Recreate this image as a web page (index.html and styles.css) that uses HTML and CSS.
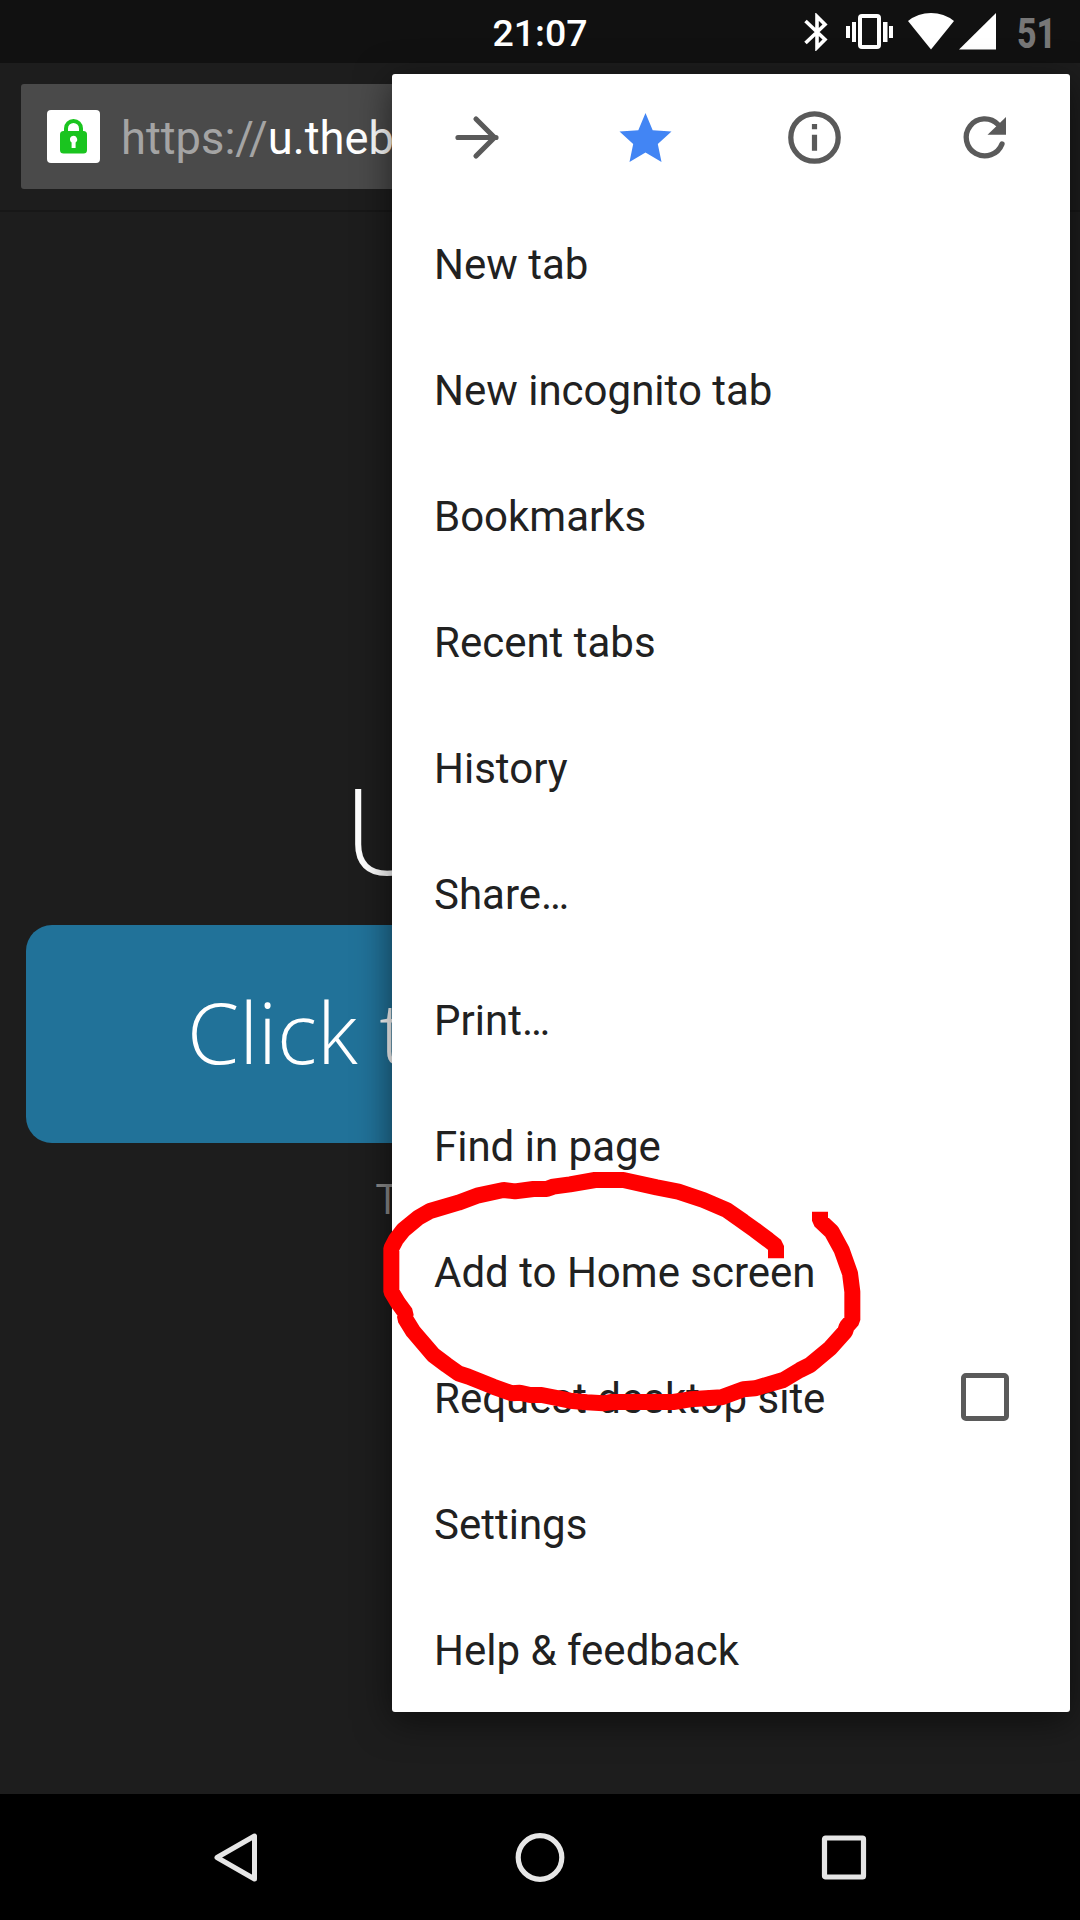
FILE: index.html
```html
<!DOCTYPE html>
<html lang="en">
<head>
<meta charset="utf-8">
<title>Browser menu</title>
<link rel="stylesheet" href="styles.css">
</head>
<body>
<div class="screen">
  <header class="status">
    <span class="clock">21:07</span>
    <div class="indicators">
      <svg class="bluetooth" width="24" height="38" viewBox="0 0 24 38"><path d="M1.5 8 21 26.500 13 34.500V3.500L21 11.500 1.500 30" fill="none" stroke="#fff" stroke-width="3.600"/></svg>
      <svg class="vibrate" width="48" height="36" viewBox="0 0 48 36"><path d="M0 12h4v12H0zM6 8h4v20H6zM37 8h4.500v20H37zM43 12h4v12h-4z" fill="#fff"/><rect x="14" y="2" width="19" height="31" rx="2" fill="none" stroke="#fff" stroke-width="4"/></svg>
      <svg class="wifi" width="46" height="37" viewBox="0 0 46 37"><path d="M23 36.500 0 8Q10 0 23 0T46 8Z" fill="#fff"/></svg>
      <svg class="signal" width="37" height="37" viewBox="0 0 37 37"><path d="M37 0V36.500H0Z" fill="#fff"/></svg>
      <span class="battery">51</span>
    </div>
  </header>
  <div class="toolbar">
    <div class="address">
      <span class="badge"><svg width="27" height="35" viewBox="0 0 27 35"><path d="M6 14V9.500a7.500 7.500 0 0 1 15 0V14" fill="none" stroke="#1ac41f" stroke-width="4"/><rect y="12" width="27" height="22.500" rx="3.500" fill="#1ac41f"/><path d="M10 21a3.600 3.600 0 1 1 5.600 2.500V29h-4V23.500A3.600 3.600 0 0 1 10 21" fill="#fff"/></svg></span>
      <span class="url"><span class="scheme">https://</span>u.theb</span>
    </div>
  </div>
  <main class="page">
    <h1 class="title">U</h1>
    <div class="button">Click t</div>
    <p class="note">T</p>
  </main>
  <nav class="navbar">
    <svg width="50" height="52" viewBox="0 0 50 52"><path d="M43.500 5v43L6 26.500Z" fill="none" stroke="#e6e6e6" stroke-width="5" stroke-linejoin="round"/></svg>
    <svg width="50" height="52" viewBox="0 0 50 52"><circle cx="25" cy="26.500" r="21.800" fill="none" stroke="#e6e6e6" stroke-width="5.200"/></svg>
    <svg width="50" height="52" viewBox="0 0 50 52"><rect x="5.500" y="7" width="39" height="39" rx="1" fill="none" stroke="#e6e6e6" stroke-width="5.200"/></svg>
  </nav>

  <div class="menu">
    <div class="actions">
      <svg viewBox="0 0 64 64"><path d="M13 32.500h38M31 14 49.500 32.500 31 51" fill="none" stroke="#5a5a5a" stroke-width="5.200" stroke-linecap="round" stroke-linejoin="round"/></svg>
      <svg viewBox="0 0 64 64"><path d="M31.500 8 38.700 25.200 57.500 26.500 43.800 39 47.500 57 31.500 47.500 15.500 57 19.200 39 5.500 26.500 24.300 25.200Z" fill="#4285f4"/></svg>
      <svg viewBox="0 0 64 64"><circle cx="31.500" cy="32.500" r="23.700" fill="none" stroke="#5a5a5a" stroke-width="5.300"/><path d="M28.900 19h5.200v5.300h-5.200zM28.900 29.800h5.200v16h-5.200z" fill="#5a5a5a"/></svg>
      <svg viewBox="0 0 64 64"><path d="M45 19.500A18.500 18.500 0 1 0 49 39" fill="none" stroke="#5a5a5a" stroke-width="5.300" stroke-linecap="round"/><path d="M53 12V29.800H34.500Z" fill="#5a5a5a"/></svg>
    </div>
    <div class="item">New tab</div>
    <div class="item">New incognito tab</div>
    <div class="item">Bookmarks</div>
    <div class="item">Recent tabs</div>
    <div class="item">History</div>
    <div class="item">Share…</div>
    <div class="item">Print…</div>
    <div class="item">Find in page</div>
    <div class="item">Add to Home screen</div>
    <div class="item">Request desktop site<span class="check"></span></div>
    <div class="item">Settings</div>
    <div class="item">Help &amp; feedback</div>
  </div>

  <svg class="scribble" viewBox="0 0 1500 900"><path d="M1218 325V288L1195 270 1155 240 1120 215 1070 180 1000 150 925 125 860 112 760 90H675L600 103 550 110 530 117H490L435 124 400 120 325 136 265 158 180 183 145 203 100 240 78 268 64 295V425L85 460 107 490 105 505 130 545 190 615 230 645 265 670 295 680 370 710 425 730 450 728 480 735H515L600 752 650 757 700 760 725 756H910L960 748 1055 742 1120 718 1155 715 1240 690 1290 660 1320 645 1380 595 1425 545 1430 530 1447 510V425L1440 370 1415 300 1385 245 1350 212V185"/></svg>
</div>
</body>
</html>
```
FILE: styles.css
```css
body { margin: 0; background: #1d1d1d; }
svg { display: block; flex: none; }

.screen {
  position: relative;
  display: flex;
  flex-direction: column;
  width: 1080px;
  height: 1920px;
  overflow: hidden;
  background: #1d1d1d;
  font-family: Roboto, sans-serif;
}

.status {
  display: grid;
  grid-template-columns: 1fr auto 1fr;
  height: 63px;
  background: #111;
  color: #fff;
}
.clock {
  grid-column: 2;
  font-size: 37.5px;
  font-weight: 500;
  line-height: 66px;
}
.indicators {
  display: flex;
  align-items: flex-start;
  justify-content: flex-end;
  padding: 13px 23px 0 0;
}
.bluetooth { margin-right: 18px; }
.vibrate { margin: 1px 14px 0 0; }
.wifi { margin-right: 5px; }
.signal { margin-right: 21px; }
.battery {
  width: 40px;
  color: #777;
  font-size: 42px;
  font-weight: 800;
  line-height: 41px;
  transform: scaleX(.81);
  transform-origin: left;
}

.toolbar {
  box-sizing: border-box;
  height: 149px;
  padding: 21px 21px 0;
  border-bottom: 2px solid #171717;
}
.address {
  display: flex;
  align-items: center;
  gap: 21px;
  width: 850px;
  height: 105px;
  padding-left: 26px;
  border-radius: 3px;
  background: #4a4a4a;
}
.badge {
  display: flex;
  align-items: center;
  justify-content: center;
  width: 53px;
  height: 53px;
  border-radius: 4px;
  background: #fff;
}
.url {
  padding-top: 5px;
  color: #fff;
  font-size: 45.3px;
  line-height: 56px;
}
.scheme { color: #a4a4a4; }

.page {
  display: flex;
  flex: 1;
  flex-direction: column;
  font-family: "Open Sans", sans-serif;
  font-weight: 300;
}
.title {
  margin: 537px 0 0 344px;
  color: #fff;
  font-size: 120px;
  font-weight: 300;
  line-height: 160px;
}
.button {
  height: 218px;
  margin: 16px 26px 0;
  padding-left: 161px;
  border-radius: 26px;
  background: #217299;
  color: #fff;
  font-size: 84px;
  line-height: 214px;
}
.note {
  margin: 27px 0 0 376px;
  color: #8a8a8a;
  font-size: 42px;
  font-weight: 400;
  line-height: 56px;
}

.navbar {
  display: flex;
  align-items: center;
  justify-content: center;
  gap: 254px;
  height: 126px;
  background: #000;
}

.menu {
  position: absolute;
  top: 73.5px;
  left: 392px;
  width: 677.5px;
  height: 1638px;
  border-radius: 3px;
  background: #fff;
  box-shadow: 0 8px 36px rgba(0, 0, 0, .55);
}
.actions {
  display: flex;
  align-items: center;
  justify-content: space-around;
  height: 126px;
}
.actions svg { width: 64px; height: 64px; }
.item {
  display: flex;
  align-items: center;
  justify-content: space-between;
  box-sizing: border-box;
  height: 126px;
  padding: 3px 61px 0 42px;
  color: #212121;
  font-size: 42px;
}
.check {
  box-sizing: border-box;
  width: 48px;
  height: 48px;
  margin-top: -3px;
  border: 5px solid #5a5a5a;
  border-radius: 5px;
}

.scribble {
  position: absolute;
  top: 1150px;
  left: 370px;
  width: 500px;
  height: 300px;
  fill: none;
  stroke: #f00;
  stroke-width: 48px;
  stroke-linejoin: bevel;
}
```
